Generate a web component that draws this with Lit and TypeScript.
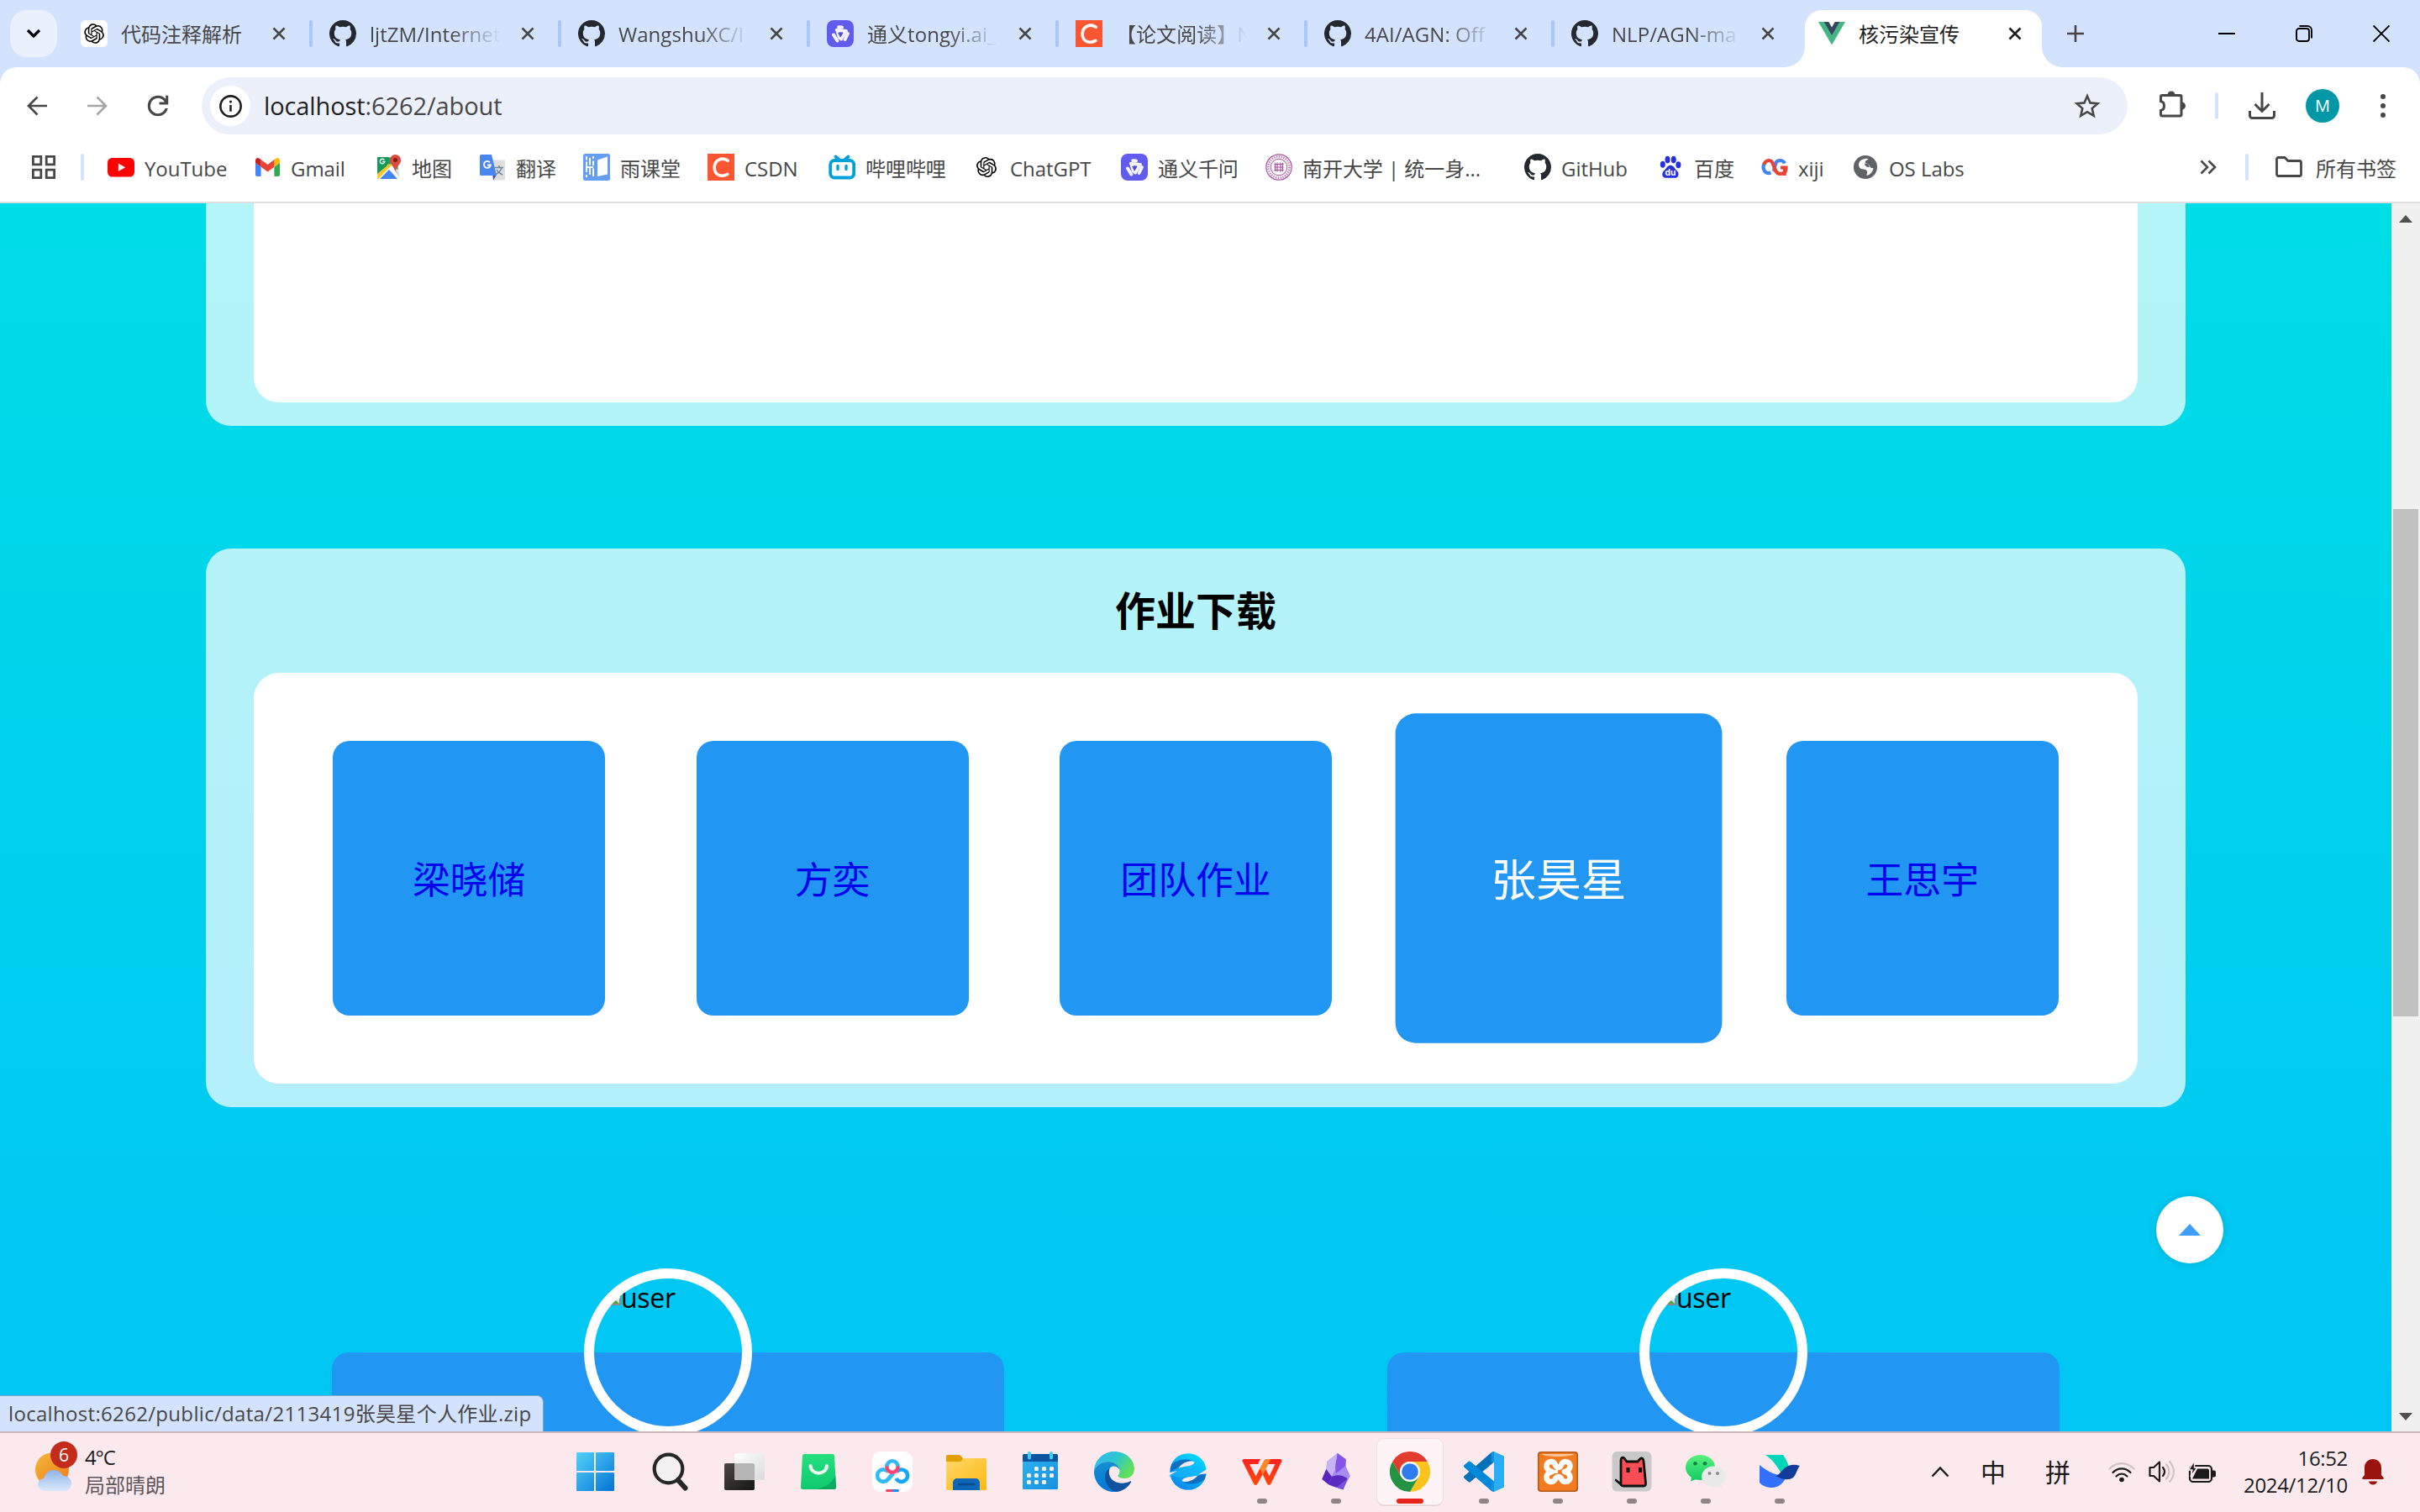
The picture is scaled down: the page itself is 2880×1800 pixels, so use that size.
import { LitElement, html, css, svg, nothing, type TemplateResult, type SVGTemplateResult } from "lit";
import { customElement, property } from "lit/decorators.js";
import { styleMap } from "lit/directives/style-map.js";
import { classMap } from "lit/directives/class-map.js";

const github = svg`<path fill="#24292f" d="M8 0C3.58 0 0 3.58 0 8c0 3.54 2.29 6.53 5.47 7.59.4.07.55-.17.55-.38 0-.19-.01-.82-.01-1.49-2.01.37-2.53-.49-2.69-.94-.09-.23-.48-.94-.82-1.13-.28-.15-.68-.52-.01-.53.63-.01 1.08.58 1.23.82.72 1.21 1.87.87 2.33.66.07-.52.28-.87.51-1.07-1.78-.2-3.64-.89-3.64-3.95 0-.87.31-1.59.82-2.15-.08-.2-.36-1.02.08-2.12 0 0 .67-.21 2.2.82.64-.18 1.32-.27 2-.27s1.36.09 2 .27c1.53-1.04 2.2-.82 2.2-.82.44 1.1.16 1.92.08 2.12.51.56.82 1.27.82 2.15 0 3.07-1.87 3.75-3.65 3.95.29.25.54.73.54 1.48 0 1.07-.01 1.93-.01 2.2 0 .21.15.46.55.38A8.013 8.013 0 0 0 16 8c0-4.42-3.58-8-8-8z"/>`;

const knot = svg`<path d="M22.2819 9.8211a5.9847 5.9847 0 0 0-.5157-4.9108 6.0462 6.0462 0 0 0-6.5098-2.9A6.0651 6.0651 0 0 0 4.9807 4.1818a5.9847 5.9847 0 0 0-3.9977 2.9 6.0462 6.0462 0 0 0 .7427 7.0966 5.98 5.98 0 0 0 .511 4.9107 6.051 6.051 0 0 0 6.5146 2.9001A5.9847 5.9847 0 0 0 13.2599 24a6.0557 6.0557 0 0 0 5.7718-4.2058 5.9894 5.9894 0 0 0 3.9977-2.9001 6.0557 6.0557 0 0 0-.7475-7.073zm-9.022 12.6081a4.4755 4.4755 0 0 1-2.8764-1.0408l.1419-.0804 4.7783-2.7582a.7948.7948 0 0 0 .3927-.6813v-6.7369l2.02 1.1686a.071.071 0 0 1 .038.052v5.5826a4.504 4.504 0 0 1-4.4945 4.4944zm-9.6607-4.1254a4.4708 4.4708 0 0 1-.5346-3.0137l.142.0852 4.783 2.7582a.7712.7712 0 0 0 .7806 0l5.8428-3.3685v2.3324a.0804.0804 0 0 1-.0332.0615L9.74 19.9502a4.4992 4.4992 0 0 1-6.1408-1.6464zM2.3408 7.8956a4.485 4.485 0 0 1 2.3655-1.9728V11.6a.7664.7664 0 0 0 .3879.6765l5.8144 3.3543-2.0201 1.1685a.0757.0757 0 0 1-.071 0l-4.8303-2.7865A4.504 4.504 0 0 1 2.3408 7.872zm16.5963 3.8558L13.1038 8.364 15.1192 7.2a.0757.0757 0 0 1 .071 0l4.8303 2.7913a4.4944 4.4944 0 0 1-.6765 8.1042v-5.6772a.79.79 0 0 0-.407-.667zm2.0107-3.0231l-.142-.0852-4.7735-2.7818a.7759.7759 0 0 0-.7854 0L9.409 9.2297V6.8974a.0662.0662 0 0 1 .0284-.0615l4.8303-2.7866a4.4992 4.4992 0 0 1 6.6802 4.66zM8.3065 12.863l-2.02-1.1638a.0804.0804 0 0 1-.038-.0567V6.0742a4.4992 4.4992 0 0 1 7.3757-3.4537l-.142.0805L8.704 5.459a.7948.7948 0 0 0-.3927.6813zm1.0976-2.3654l2.602-1.4998 2.6069 1.4998v2.9994l-2.5974 1.4997-2.6067-1.4997Z"/>`;

const tongyi = svg`<rect width="32" height="32" rx="8" fill="#615ced"/>
  <g fill="none" stroke-linecap="round" stroke-linejoin="round">
    <g stroke="#f4f3ff" stroke-width="4">
      <path d="M14.200 8.200 18 8.600"/><path d="M11.800 11.800 23 13"/>
      <path d="M25 16 21.600 23"/><path d="M21 15.500 17 22.500"/>
      <path d="M8 17.500 12.400 24.500"/><path d="M12.800 14 15 21"/>
    </g>
    <path d="M14 15.200h5l-2.700 4.600z" stroke="#5a54d6" stroke-width="1" fill="#4a44c9"/>
  </g>`;

const csdn = svg`<rect width="32" height="32" fill="#fc5531"/>
  <path d="M24.2 8.2C17.5 3.6 8.4 7 8.2 16.4c-.1 9.200 8.500 12 15.600 8" fill="none" stroke="#fff" stroke-width="3.600" stroke-linecap="round"/>`;

/** Icon artwork: view box and shapes. */
const ART: Record<string, [string, SVGTemplateResult]> = {
  github: ["0 0 16 16", github],
  knot: ["-2 -2 28 28", knot],
  knotTile: ["0 0 32 32", svg`<rect width="32" height="32" rx="6" fill="#fff"/><g transform="translate(4.200 4.200) scale(.985)">${knot}</g>`],
  tongyi: ["0 0 32 32", tongyi],
  csdn: ["0 0 32 32", csdn],
  vue: ["0 0 32 28", svg`<path fill="#41b883" d="M0 0h6.400L16 16.500 25.600 0H32L16 27.500z"/><path fill="#35495e" d="M6.400 0h5.900L16 6.400 19.700 0h5.900L16 16.500z"/>`],
  youtube: ["0 0 32 23", svg`<rect width="32" height="22.500" rx="5.500" fill="#f00"/><path d="M12.800 6.400v9.700l8.400-4.850z" fill="#fff"/>`],
  gmail: ["52 42 88 66", svg`<path fill="#4285f4" d="M58 108h14V74L52 59v43c0 3.320 2.690 6 6 6"/><path fill="#34a853" d="M120 108h14c3.320 0 6-2.690 6-6V59l-20 15"/><path fill="#fbbc04" d="M120 48v26l20-15v-8c0-7.420-8.470-11.650-14.400-7.200"/><path fill="#ea4335" d="M72 74V48l24 18 24-18v26L96 92"/><path fill="#c5221f" d="M52 51v8l20 15V48l-5.600-4.200c-5.940-4.450-14.400-.220-14.400 7.200"/>`],
  maps: ["0 0 32 32", svg`<path d="M3.500 4.500h24v25h-24z" fill="#1da262"/><path d="M3.500 29 20 12l9 16.500-1 1.500H4z" fill="#fff"/><path d="M17 19 6 30h21z" fill="#4285f4"/><path d="M22 14l7 7v8z" fill="#dadce0"/><path d="M3 22 15 13l7.500-1.500L4 29.600z" fill="#fbc92d"/><path d="M3 21.500v8l1.500.4L18 15l-2-3z" fill="#fbc92d"/><path d="M3 4h14L15 14 3 24z" fill="#15995a"/>
    <path d="M24.500 1a6.600 6.600 0 0 1 6.600 6.600c0 5.400-4.900 6.400-6.600 14-1.700-7.600-6.600-8.600-6.600-14A6.600 6.600 0 0 1 24.500 1z" fill="#dd4b3e"/><circle cx="24.500" cy="7.400" r="2.500" fill="#7d1c16"/><path d="M11.300 7.300a2.800 2.800 0 1 0 .6 2.200H9.200" stroke="#fff" stroke-width="1.300" fill="none"/>`],
  translate: ["0 0 32 32", svg`<path d="M11 7.500h20V30a1.500 1.500 0 0 1-1.500 1.500H17z" fill="#dedede"/><path d="M16.500 25H21l-4 6.500z" fill="#3a48c0"/><path d="M2.500 1H15l6 25H2.500A1.500 1.500 0 0 1 1 24.500v-22A1.500 1.500 0 0 1 2.500 1z" fill="#4a86f0"/><path d="M13 10.300a4 4 0 1 0 .9 3.200H10" stroke="#fff" stroke-width="1.900" fill="none"/><g stroke="#6f8796" stroke-width="1.500" fill="none"><path d="M19 16.500h10M24 14v2.500M27 16.500c-1 4-4 6.500-7 8M21 19c1.500 3 4 4.500 7 6"/></g>`],
  yuketang: ["0 0 32 32", svg`<rect width="32" height="32" rx="2.500" fill="#639ef4"/><path d="M17 7.500 29 3.500v21L17 27z" fill="#fff"/><g stroke="#fff" stroke-width="2"><path d="M4 3v4.500M4 9.500V22M4 25v3M8 5v8.500M8 17v8M12 3v3M12 8.500V14M4 16h8M12 17.500V27"/></g>`],
  bilibili: ["0 0 32 32", svg`<g fill="none" stroke="#00a1d6" stroke-width="3.800" stroke-linecap="round"><path d="m8.500 3.500 4.500 4M23.500 3.500l-4.500 4"/><rect x="2.200" y="8" width="28" height="20.500" rx="5"/></g><path d="M11 14.500v4M21 14.500v4" stroke="#00a1d6" stroke-width="3.400" stroke-linecap="round"/>`],
  nankai: ["0 0 32 32", svg`<g fill="none" stroke="#a8509f"><circle cx="16" cy="16" r="15.200" stroke-width="1.200"/><circle cx="16" cy="16" r="12.600" stroke-width="2.600" stroke-dasharray="1.300 1.500" stroke="#b873b1"/><circle cx="16" cy="16" r="9.800" stroke-width="1"/><path d="M11.500 11v10M14 10.500v11M18 10.500v11M20.500 11v10M10.500 12.500h11M10.500 16h11M10.500 19.500h11" stroke-width="1.200"/></g>`],
  baidu: ["0 0 32 32", svg`<g fill="#2630de"><ellipse cx="6.200" cy="12.500" rx="3.200" ry="4.200"/><ellipse cx="12.300" cy="6.500" rx="3.200" ry="4.600"/><ellipse cx="20" cy="6.500" rx="3.200" ry="4.600"/><ellipse cx="26" cy="13" rx="3.200" ry="4.200"/><path d="M16 13.500c4 0 5.500 4.500 8 6.700 3.500 3 2.700 9.300-2 9.300H10c-5 0-5.600-6.300-2-9.300 2.500-2.200 4-6.700 8-6.700z"/></g><text x="16" y="27" text-anchor="middle" fill="#fff" font-family="Inter, sans-serif" font-weight="700" font-size="11">du</text>`],
  xiji: ["0 0 32 22", svg`<g fill="none" stroke-width="4.200"><path d="M12.500 4.200C9 1.600 4.800 3.500 3.200 8" stroke="#ea4335"/><path d="M3.200 7.500C1 14 5 19.500 11.500 17.800" stroke="#4285f4"/><path d="M14.500 16c2.500-3 .5-13 7.500-13 3 0 5 1.200 6 3.500" stroke="#4285f4"/><path d="M12 4c3.500 3 3.500 14 9.500 14.800 5 .5 8-1 8-7.300H23" stroke="#ea4335"/><path d="M27.800 11.500V21" stroke="#ea4335" stroke-width="4"/></g>`],
  globe: ["0 0 28 28", svg`<circle cx="14" cy="14" r="14" fill="#5f6368"/><path d="M9 5.500c3-1.500 7-2 8.500-1.500-1 2-4.500 2-3.500 4.500.8 2 4 1 5 4 1 3.500 4 2 4.500 3-1 4.500-4 7.500-8 8.500 0-3 2-4.500-.5-6.500-2.500-2-6 .5-8.500-4C5 10 7 7 9 5.500z" fill="#fff"/><path d="M13.500 9c2 1.500 4.800.5 5.200 4.500-1.500 1.500-4-.5-5.500-2z" fill="#5f6368"/>`],
  close: ["0 0 16 16", svg`<path d="m1.500 1.500 13 13m0-13-13 13" fill="none" stroke="currentColor" stroke-width="2.600"/>`],
  chevronDown: ["0 0 18 12", svg`<path d="m2 2 7 7 7-7" fill="none" stroke="currentColor" stroke-width="3.200"/>`],
  plus: ["0 0 22 22", svg`<path d="M11 1v20M1 11h20" stroke="#474747" stroke-width="2.600"/>`],
  minimize: ["0 0 20 20", svg`<path d="M0 10h20" stroke="#000" stroke-width="2"/>`],
  restore: ["0 0 20 20", svg`<g fill="none" stroke="#000" stroke-width="1.900"><rect x="1" y="4" width="15" height="15" rx="3"/><path d="M4.500 1h9.500a5 5 0 0 1 5 5v9.500"/></g>`],
  windowClose: ["0 0 20 20", svg`<path d="m.5.5 19 19m0-19-19 19" stroke="#000" stroke-width="1.900"/>`],
  back: ["0 0 24 24", svg`<path d="M24 12H2.500M12.500 1.500 2 12l10.500 10.500" fill="none" stroke="currentColor" stroke-width="2.700"/>`],
  forward: ["0 0 24 24", svg`<path d="M0 12h21.500M11.500 1.500 22 12 11.500 22.500" fill="none" stroke="currentColor" stroke-width="2.700"/>`],
  reload: ["3.500 3.500 17 17", svg`<path fill="#474747" d="M12 20q-3.350 0-5.675-2.325T4 12t2.325-5.675T12 4q1.725 0 3.300.712T18 6.750V4h2v7h-7V9h4.200q-.8-1.400-2.187-2.200T12 6Q9.500 6 7.750 7.750T6 12t1.750 4.250T12 18q1.925 0 3.475-1.100T17.650 14h2.100q-.7 2.650-2.850 4.325T12 20"/>`],
  info: ["0 0 26 26", svg`<circle cx="13" cy="13" r="11.700" fill="none" stroke="#1f1f1f" stroke-width="2.500"/><path d="M13 11.500v7.500" stroke="#1f1f1f" stroke-width="2.400"/><circle cx="13" cy="7.800" r="1.500" fill="#1f1f1f"/>`],
  star: ["0 0 32 32", svg`<path d="m16 4.200 3.500 8.200 8.900.8-6.700 5.900 2 8.700L16 23.200l-7.700 4.600 2-8.700-6.700-5.900 8.900-.8z" fill="none" stroke="#474747" stroke-width="2.600"/>`],
  puzzle: ["0 0 36 36", svg`<path d="M4.500 12.500V7a1.500 1.500 0 0 1 1.500-1.500h21.500A1.500 1.500 0 0 1 29 7v21.500a1.500 1.500 0 0 1-1.500 1.500H6a1.500 1.500 0 0 1-1.500-1.500v-5c2.600-.6 4-2.900 4-5.500s-1.400-4.900-4-5.500z" fill="none" stroke="#474747" stroke-width="3"/><path d="M12.500 5a4.500 4.500 0 0 1 9 0zM29.500 13.500a4.500 4.500 0 0 1 0 9z" fill="#474747"/>`],
  download: ["0 0 32 32", svg`<path d="M16 0v21M7.500 14l8.500 8.500 8.500-8.500M1.500 22v5.500a3 3 0 0 0 3 3h23a3 3 0 0 0 3-3V22" fill="none" stroke="#474747" stroke-width="3"/>`],
  dots: ["0 0 8 28", svg`<g fill="#474747"><circle cx="4" cy="3" r="3"/><circle cx="4" cy="14" r="3"/><circle cx="4" cy="25" r="3"/></g>`],
  apps: ["0 0 28 28", svg`<g fill="none" stroke="#474747" stroke-width="2.800"><path d="M1.400 1.400h9.400v9.400H1.400zM17.200 1.400h9.400v9.400h-9.400zM1.400 17.200h9.400v9.400H1.400zM17.200 17.200h9.400v9.400h-9.400z"/></g>`],
  more: ["0 0 20 18", svg`<path d="m1.500 1.500 7.500 7.500-7.500 7.500M10.500 1.500 18 9l-7.500 7.500" fill="none" stroke="#474747" stroke-width="2.600"/>`],
  folder: ["0 0 32 26", svg`<path d="M1.500 3.500a2 2 0 0 1 2-2h7.500l4 4h13.500a2 2 0 0 1 2 2v14a2 2 0 0 1-2 2h-25a2 2 0 0 1-2-2z" fill="none" stroke="#474747" stroke-width="2.800"/>`],
  broken: ["0 0 32 32", svg`<path d="M3 1h20l8 8v22H3z" fill="#cfe2f8" stroke="#8a8a8a" stroke-width="2"/><path d="M4 30 16 16l14 14z" fill="#51a83b"/><path d="m20 22 11-9v10l-6 4z" fill="#fff"/>`],
  up: ["0 0 26 14", svg`<path d="M13 0 26 14H0z" fill="#409eff"/>`],
  arrowUp: ["0 0 16 9", svg`<path d="M8 0l8 9H0z" fill="#505050"/>`],
  arrowDown: ["0 0 16 9", svg`<path d="M8 9 16 0H0z" fill="#505050"/>`],
  weather: ["0 0 44 46", svg`<defs><linearGradient id="sun" x1="0" y1="0" x2="1" y2="1"><stop offset="0" stop-color="#f2b93a"/><stop offset="1" stop-color="#f07818"/></linearGradient><linearGradient id="cloud" x1="0" y1="0" x2="0" y2="1"><stop offset="0" stop-color="#8fb4ee"/><stop offset="1" stop-color="#dbe8fb"/></linearGradient></defs><circle cx="20" cy="20.500" r="20" fill="url(#sun)"/><path d="M11 46a7.500 7.500 0 0 1-.8-15A12 12 0 0 1 33 28a9 9 0 0 1 2 18z" fill="url(#cloud)"/>`],
  windows: ["1 0 48 48", svg`<defs><linearGradient id="win" gradientUnits="userSpaceOnUse" x1="0" y1="0" x2="48" y2="48"><stop offset="0" stop-color="#55d4ff"/><stop offset="1" stop-color="#0070d0"/></linearGradient></defs><g fill="url(#win)"><rect y="1" width="22" height="22" rx="1"/><rect x="24" y="1" width="22" height="22" rx="1"/><rect y="25" width="22" height="22" rx="1"/><rect x="24" y="25" width="22" height="22" rx="1"/></g>`],
  search: ["-1 0 48 48", svg`<circle cx="20.500" cy="20.500" r="16.800" fill="#f5f1f2" stroke="#262828" stroke-width="4.200"/><path d="m32 34 8.500 9.500" stroke="#262828" stroke-width="6" stroke-linecap="round"/>`],
  taskview: ["0 0 48 48", svg`<defs><linearGradient id="tvd" x1="0" y1="0" x2="1" y2="1"><stop offset="0" stop-color="#4a4845"/><stop offset="1" stop-color="#151515"/></linearGradient><linearGradient id="tvl" x1="0" y1="0" x2="1" y2="1"><stop offset="0" stop-color="#fff"/><stop offset="1" stop-color="#d9dadb"/></linearGradient></defs><rect y="14" width="36" height="32" rx="2" fill="url(#tvd)"/><rect x="12" y="2" width="36" height="32" rx="2" fill="url(#tvl)"/><path d="M12 14h22a2 2 0 0 1 2 2v18H14a2 2 0 0 1-2-2z" fill="#b5b5b5"/>`],
  store: ["0 0 48 48", svg`<defs><linearGradient id="bag" x1="0" y1="0" x2="0" y2="1"><stop offset="0" stop-color="#25e07f"/><stop offset="1" stop-color="#0fc96f"/></linearGradient></defs><path d="M7 3h34a2 2 0 0 1 2 2l2 37.500a2.500 2.500 0 0 1-2.500 2.500h-37A2.500 2.500 0 0 1 3 42.500L5 5a2 2 0 0 1 2-2z" fill="url(#bag)"/><path d="M44.200 28 45 42.500a2.500 2.500 0 0 1-2.500 2.500H21c14-3 21-9 23.200-17z" fill="#0a9f5f" opacity=".75"/><path d="M14.500 17c1 11.500 18.500 11.500 19.500 0" fill="none" stroke="#eef8f2" stroke-width="4" stroke-linecap="round"/>`],
  netdisk: ["0 0 48 48", svg`<rect width="48" height="48" rx="10" fill="#fff"/><g fill="none" stroke-width="4.600"><path d="M19 31.500A7 7 0 1 1 17 23.500" stroke="none"/><path d="M29 24.500a7.200 7.200 0 1 1-.5 7.500" stroke="#16a5ff"/><path d="M18.800 24a7.200 7.200 0 1 0 .2 9l5.500-6.500" stroke="#2fbcf5"/><path d="M19 33l6-7" stroke="#2fbcf5"/><path d="M17.300 18a6.700 6.700 0 0 1 13.400 0" stroke="#33b8f5"/><path d="M17.300 17.500a6.700 7.500 0 0 0 13.400 0" stroke="#fb4571"/></g><path d="M17.500 45H24v3h-6.500a1.500 1.500 0 0 1 0-3z" fill="#fb3e68"/><path d="M24 45h6.500a1.500 1.500 0 0 1 0 3H24z" fill="#2186fb"/>`],
  explorer: ["0 0 48 48", svg`<defs><linearGradient id="fld" x1="0" y1="0" x2="1" y2="1"><stop offset="0" stop-color="#ffd868"/><stop offset="1" stop-color="#fdb813"/></linearGradient></defs><path d="M0 5.500A1.500 1.500 0 0 1 1.500 4H15c2 0 3 2 5 4v6H0z" fill="#e0a000"/><path d="M0 12h16c3 0 3-4 6-4h24.500A1.500 1.500 0 0 1 48 9.500v35a1.500 1.500 0 0 1-1.500 1.500h-45A1.500 1.500 0 0 1 0 44.500z" fill="url(#fld)"/><path d="M8 46v-9a5 5 0 0 1 5-5h22a5 5 0 0 1 5 5v9z" fill="#0d66b8"/><path d="M15 39h18" stroke="#0a4a8c" stroke-width="2.400" stroke-linecap="round"/>`],
  calendar: ["0 0 48 48", svg`<defs><linearGradient id="cal" x1="0" y1="0" x2="1" y2="1"><stop offset="0" stop-color="#2bb0ee"/><stop offset="1" stop-color="#178fe0"/></linearGradient></defs><path d="M3 10h42v33.500a1.500 1.500 0 0 1-1.500 1.500h-39A1.500 1.500 0 0 1 3 43.500z" fill="url(#cal)"/><path d="M3 4.500A1.500 1.500 0 0 1 4.500 3h39A1.500 1.500 0 0 1 45 4.500V12H3z" fill="#0b55a0"/><path d="M11 2v5.500M37 2v5.500" stroke="#42cdf8" stroke-width="4" stroke-linecap="round"/><g fill="#f2f4f5"><rect x="17" y="18" width="5" height="5" rx="1.500"/><rect x="26" y="18" width="5" height="5" rx="1.500"/><rect x="35" y="18" width="5" height="5" rx="1.500"/><rect x="8" y="26" width="5" height="5" rx="1.500"/><rect x="17" y="26" width="5" height="5" rx="1.500"/><rect x="26" y="26" width="5" height="5" rx="1.500"/><rect x="35" y="26" width="5" height="5" rx="1.500"/><rect x="8" y="34" width="5" height="5" rx="1.500"/><rect x="17" y="34" width="5" height="5" rx="1.500"/><rect x="26" y="34" width="5" height="5" rx="1.500"/></g>`],
  edge: ["0 0 48 48", svg`<defs><linearGradient id="ed1" x1="0" y1="0" x2="1" y2=".5"><stop offset="0" stop-color="#36b5f5"/><stop offset=".55" stop-color="#2bc8ce"/><stop offset="1" stop-color="#62e05a"/></linearGradient><linearGradient id="ed2" x1="0" y1="0" x2="0" y2="1"><stop offset="0" stop-color="#158fd0"/><stop offset="1" stop-color="#0078d8"/></linearGradient></defs>
    <path d="M0 24C0 10.700 10.700 0 24 0s24 9 24 20.500c0 7-5 11.500-11.500 11.500-4.500 0-8.500-1.500-8-3.500.3-1 2-2 2-5.500 0-6-6-11-13.500-11C8 12 1.500 17 0 24z" fill="url(#ed1)"/>
    <path d="M0 24c1.500-7 8-12 17-12 7 0 13 4.500 13.500 10-1.500-3-4-4.500-7-4.500-5 0-8 6-6 13.500C20 39.500 28 44 36 43c-3.500 3-8 5-12.500 5C10.700 48 0 37.300 0 24z" fill="url(#ed2)"/>
    <path d="M18.500 20C11 24 11.500 37 19 44c2 2 4.500 3.300 7 4 8-.5 14.500-5 18-11.500.5-1-.3-1.500-1.200-1C34 40 20 37.500 18 27c-.4-3 .2-5.500.5-7z" fill="#10529e"/>`],
  browser360: ["0 0 48 48", svg`<defs><linearGradient id="e36" x1=".8" y1="0" x2=".2" y2="1"><stop offset="0" stop-color="#04dcff"/><stop offset="1" stop-color="#0a84ec"/></linearGradient></defs><circle cx="24" cy="24" r="21.800" fill="url(#e36)"/><path d="M4.500 15C12 9.500 22 8 31 11.500 24 9 14 19 3 24c0-3 .4-6 1.500-9z" fill="#0e6fc4"/><path d="M43.500 33C37 39 26 40.500 16.500 36 26 39 33 29 45 24.500c0 3-.4 6-1.500 8.500z" fill="#0e6fc4"/><path d="M13 19.500c4-7 14-9.500 18.500-7-1.500 5-8.500 4.500-18.500 7z" fill="#fce9ee"/><path d="M35 28.500c-4 6.500-14 9-18.500 6.500 1.500-5 8.500-4 18.500-6.500z" fill="#fce9ee"/><path d="M1.500 26C14 24 27 15 37 22c4-1 7-1 10 0-12 2-24 11-35 8.500C8.500 28.500 5 28.500 2 31z" fill="#1bb8fb" opacity=".55"/><path d="M0 25.500 11.500 23 0 29zM48 26l-12 1.500L48 20z" fill="#fce9ee"/>`],
  wps: ["0 0 48 48", svg`<defs><linearGradient id="wps" x1="0" y1="0" x2="0" y2="1"><stop offset="0" stop-color="#ff2020"/><stop offset="1" stop-color="#ff4a0a"/></linearGradient></defs><path d="M2.500 9H22l-3 6H9l7.500 14.500L26.500 11a3.500 3.500 0 0 1 3-2h16a2 2 0 0 1 1.700 3L34.500 38.500a2.500 2.500 0 0 1-4.500 0L27.500 33l-2.700-5.500 3.500-6.500 4.200 8.500L39.500 15h-8.300L18.500 38.500a2.500 2.500 0 0 1-4.500 0L.8 12A2 2 0 0 1 2.500 9z" fill="url(#wps)"/><path d="M29.500 9h5l-3.300 6-6.700 12-3.200-6.500L26.500 11a3.500 3.500 0 0 1 3-2z" fill="#fb8a24"/>`],
  obsidian: ["0 0 48 48", svg`<path d="M25.700 2 35.700 9.300l-.4 8 5.400 12-8.400 16-12.300-4-12.700-8.300L12.300 21l1-9z" fill="#a88bf0"/><path d="M25.700 2 13.300 12l-1 9 6 9.500 5-9.500z" fill="#c6b5f4"/><path d="M25.700 2 35.700 9.300l-.4 8L24 28l-1-10z" fill="#8554ea"/><path d="M35.300 17.300l5.400 12-3.700 4L22.500 27z" fill="#a78cf2"/><path d="M12.300 21 7.300 33l8 6.500L19 30z" fill="#5a25bd"/><path d="M19 30c6-3 13-2 18.500 2l-5.200 13.300-12.300-4-4.700-1.800z" fill="#5a2bc0"/><path d="m37 33-4.700 12.300-8-2.500z" fill="#7d50e0"/>`],
  chrome: ["0 0 48 48", svg`<path d="M24 12h20.800A24 24 0 0 1 24 48l10.400-18z" fill="#fcc31e"/><path d="M3.200 12A24 24 0 0 0 24 48l10.400-18H13.600z" fill="#229342"/><path d="M3.200 12A24 24 0 0 1 44.800 12H24A12 12 0 0 0 13.600 30z" fill="#e33b2e"/><circle cx="24" cy="24" r="12" fill="#fff"/><circle cx="24" cy="24" r="9.800" fill="#2f7bf0"/>`],
  vscode: ["0 0 48 48", svg`<path d="M36 0v12.500L8 36a2 2 0 0 1-2.600 0L.8 32a2 2 0 0 1 0-3L33 1z" fill="#0071ba"/><path d="M36 48V35.500L8 12a2 2 0 0 0-2.600 0L.8 16a2 2 0 0 0 0 3L33 47z" fill="#0089d8"/><path d="M36 0l12 5.500v37L36 48z" fill="#29aef6"/><path d="M36 0 33 1v12h3zM36 48l-3-1V35h3z" fill="#1292df"/>`],
  xampp: ["0 0 48 48", svg`<rect width="48" height="48" rx="4" fill="#b35a17"/><rect x="1.500" y="1.500" width="45" height="45" rx="4" fill="#f27a20"/><path d="M5 3h38c-2 4-36 4-38 0z" fill="#fbc59a"/><g fill="none" stroke="#fff" stroke-width="6.600" stroke-linejoin="round"><path d="M17 24c-8.500-1.500-8.500-12-1-12 6.500 0 3.500 7 8.500 7s2-7 8.500-7c7.500 0 7.500 10.500-1 12 8.500 1.500 8.500 12 1 12-6.500 0-3.500-6-8.500-6s-2 6-8.500 6c-7.500 0-7.500-10.500 1-12z"/><path d="M16 24h8" stroke-width="4"/></g>`],
  cat: ["0 0 48 48", svg`<rect x=".5" width="47" height="47.500" rx="6" fill="#c9c9c9"/><path d="M12 40 5 34" stroke="#111" stroke-width="2.600" stroke-linecap="round"/><path d="M11 11c0-3.500 2-5 4-3l3 4h13l3-3.500c2-1.500 4 0 4 3l2.500 26c.2 2.500-.5 3.500-2.500 3.500H14c-2.500 0-3-1-3-3.500z" fill="#ff4d55" stroke="#111" stroke-width="2.800"/><path d="M19.500 19v6M34 19v6" stroke="#111" stroke-width="4"/>`],
  wechat: ["0 0 48 48", svg`<defs><linearGradient id="wx" x1="0" y1="0" x2="0" y2="1"><stop offset="0" stop-color="#5af07e"/><stop offset="1" stop-color="#0fcb63"/></linearGradient></defs><path d="M17.500 4C27 4 35 10.500 35 19s-8 15-17.500 15c-2 0-4-.3-5.800-.8L6 35.500l1-4.700C2.800 28 0 23.800 0 19 0 10.500 8 4 17.500 4z" fill="url(#wx)"/><circle cx="11.500" cy="14.300" r="2.300" fill="#13824a"/><circle cx="23" cy="14.300" r="2.300" fill="#13824a"/><path d="M33.500 17.500C41.500 17.500 48 23 48 29.700c0 4-2 7.300-5.500 9.500l.5 4-4.500-2c-1.600.5-3.200.8-5 .8-8 0-14.300-5.500-14.300-12.300s6.300-12.200 14.300-12.200z" fill="#e9e9e9"/><circle cx="28.500" cy="26" r="2" fill="#8c8c8c"/><circle cx="38" cy="26" r="2" fill="#8c8c8c"/>`],
  lark: ["0 0 48 48", svg`<path d="M7 4h21c3.500 5 6 10 7.500 16L26 26.500C21 17 14.500 9 7 4z" fill="#00d6b9"/><path d="M0 16c9 8 20 12.500 32 14-4 8-9.500 13-17 13C8 43 3 40.500 0 37z" fill="#3370ff"/><path d="M19.500 29c5-2 7-7 12-10.500S42 15 48 17c-3.500 4-4 10-8 14-5 3.500-13 3-20.500-2z" fill="#133c9a"/>`],
  chevronUp: ["0 0 22 14", svg`<path d="M1.500 12.500 11 2.500l9.500 10" fill="none" stroke="#1b1b1b" stroke-width="2.400"/>`],
  wifi: ["0 0 32 26", svg`<g fill="none" stroke-width="2.200" stroke-linecap="round"><path d="M1.500 9.500c8-8.500 21-8.500 29 0" stroke="#d3c1c7"/><path d="M5.500 14c6-6.300 15-6.300 21 0M9.500 18.500c4-4 9-4 13 0" stroke="#1b1b1b"/></g><circle cx="16" cy="22.500" r="2.800" fill="#1b1b1b"/>`],
  volume: ["0 0 32 28", svg`<g fill="none" stroke-width="2.200" stroke-linecap="round" stroke-linejoin="round"><path d="M1.500 9h4.500l7-6.500v23L6 19H1.500z" stroke="#1b1b1b"/><path d="M17 9c2.500 3 2.500 7 0 10" stroke="#1b1b1b"/><path d="M21 5.500c4.500 5 4.500 12 0 17M25 2c6.500 7 6.500 17 0 24" stroke="#d3c1c7"/></g>`],
  battery: ["0 0 34 26", svg`<rect x="2" y="6" width="26" height="19" rx="4" fill="none" stroke="#1b1b1b" stroke-width="2.200"/><path d="M29 11.500h2a2 2 0 0 1 2 2v4a2 2 0 0 1-2 2h-2z" fill="#1b1b1b"/><path d="M11 9.500h12a2 2 0 0 1 2 2v10H5z" fill="#1b1b1b"/><path d="M7.500 0 .5 11H5l-2 8 8-11H7.500z" fill="#1b1b1b" stroke="#fce9ee" stroke-width="1.400"/>`],
  bell: ["0 0 26 31", svg`<path d="M13 0c6 0 10 4.500 10 10v9l2.500 3a1.200 1.200 0 0 1-1 2h-23a1.200 1.200 0 0 1-1-2L3 19v-9C3 4.500 7 0 13 0z" fill="#9b130e"/><path d="M8 26.500h10c-.5 2.500-2.500 4-5 4s-4.500-1.500-5-4z" fill="#9b130e"/>`],
};

function icon(name: string, w: number, h = w): TemplateResult {
  const [box, shapes] = ART[name];
  return html`<svg class="icon" width=${w} height=${h} viewBox=${box} preserveAspectRatio="xMidYMid meet" aria-hidden="true">${shapes}</svg>`;
}

const base = css`
  * { box-sizing: border-box; }
  .icon { display: block; flex: none; }
  :host { font-family: "Open Sans", "Noto Sans CJK SC", sans-serif; }
`;

interface Tab { icon: string; title: string; width: number; titleWidth: number; last?: boolean }
const TABS: Tab[] = [
  { icon: "knotTile", title: "代码注释解析", width: 296, titleWidth: 156 },
  { icon: "github", title: "ljtZM/Internet", width: 296, titleWidth: 156 },
  { icon: "github", title: "WangshuXC/I", width: 296, titleWidth: 156 },
  { icon: "tongyi", title: "通义tongyi.ai_", width: 296, titleWidth: 156 },
  { icon: "csdn", title: "【论文阅读】N", width: 296, titleWidth: 156 },
  { icon: "github", title: "4AI/AGN: Off", width: 294, titleWidth: 154 },
  { icon: "github", title: "NLP/AGN-ma", width: 298, titleWidth: 154, last: true },
];

interface Bookmark { icon: string; iconW?: number; iconH?: number; title: string; textWidth: number }
const BOOKMARKS: Bookmark[] = [
  { icon: "youtube", iconH: 23, title: "YouTube", textWidth: 98 },
  { icon: "gmail", iconW: 29, iconH: 22, title: "Gmail", textWidth: 68 },
  { icon: "maps", title: "地图", textWidth: 48 },
  { icon: "translate", title: "翻译", textWidth: 48 },
  { icon: "yuketang", title: "雨课堂", textWidth: 72 },
  { icon: "csdn", title: "CSDN", textWidth: 68 },
  { icon: "bilibili", title: "哔哩哔哩", textWidth: 96 },
  { icon: "knot", iconW: 28, title: "ChatGPT", textWidth: 100 },
  { icon: "tongyi", title: "通义千问", textWidth: 96 },
  { icon: "nankai", title: "南开大学 | 统一身...", textWidth: 232 },
  { icon: "github", title: "GitHub", textWidth: 82 },
  { icon: "baidu", iconW: 30, title: "百度", textWidth: 48 },
  { icon: "xiji", iconH: 22, title: "xiji", textWidth: 32 },
  { icon: "globe", iconW: 28, title: "OS Labs", textWidth: 96 },
];

@customElement("browser-chrome")
export class BrowserChrome extends LitElement {
  static styles = [base, css`
    :host { display: block; background: #d3e3fd; color: #474747; font-size: 24px; line-height: 32px; }
    .strip { display: flex; height: 80px; align-items: center; padding-left: 12px; }
    .search { width: 56px; height: 56px; border-radius: 20px; background: #e9f1fe; color: #000; display: grid; place-items: center; margin-right: 8px; }
    .tab { display: flex; align-items: center; height: 80px; padding-left: 20px; flex: none; }
    .title { overflow: hidden; white-space: nowrap; margin: 0 24px 0 16px; flex: none; letter-spacing: .05px; height: 38px; padding-top: 2px; line-height: 36px;
      -webkit-mask-image: linear-gradient(90deg, #000 calc(100% - 60px), transparent); mask-image: linear-gradient(90deg, #000 calc(100% - 60px), transparent); }
    .plain { -webkit-mask-image: none; mask-image: none; letter-spacing: 0; }
    .sep { width: 4px; height: 32px; border-radius: 2px; background: #a8c7fa; margin-left: auto; }
    .active { position: relative; width: 282px; height: 68px; align-self: flex-end; background: #fff; border-radius: 20px 20px 0 0; padding: 0 24px 12px 16px; color: #1f1f1f; }
    .active .title { margin-right: auto; }
    .active::before, .active::after { content: ""; position: absolute; bottom: 0; width: 24px; height: 24px; }
    .active::before { left: -24px; background: radial-gradient(circle at 0 0, transparent 23.5px, #fff 24px); }
    .active::after { right: -24px; background: radial-gradient(circle at 100% 0, transparent 23.5px, #fff 24px); }
    .new { margin-left: 29px; }
    .controls { display: flex; margin-left: auto; }
    .control { width: 92px; height: 80px; display: grid; place-items: center; }
    .bar { display: flex; align-items: center; height: 92px; background: #fff; border-radius: 20px 20px 0 0; padding: 0 8px; }
    .cell { width: 72px; display: grid; place-items: center; flex: none; }
    .muted { color: #a6a6a6; }
    .omnibox { flex: 1; height: 68px; border-radius: 34px; background: #ecf0fa; margin: 0 17px 0 16px; display: flex; align-items: center; padding: 0 32px 0 10px; }
    .site { width: 48px; height: 48px; border-radius: 50%; background: #fff; display: grid; place-items: center; margin-right: 16px; }
    .url { font-size: 29px; letter-spacing: -.1px; line-height: 44px; flex: 1; }
    .host { color: #1f1f1f; }
    .divider { width: 4px; height: 32px; border-radius: 2px; background: #d3e3fd; flex: none; }
    .bar .divider { margin: 0 16px 0 15px; }
    .avatar { width: 40px; height: 40px; border-radius: 50%; background: #0097a7; color: #fff; font-size: 20px; display: grid; place-items: center; }
    .marks { display: flex; align-items: center; height: 70px; padding: 0 28px 14px 38px; background: #fff; border-bottom: 2px solid #dfdfdf; }
    .marks .first { margin: 0 28px 0 30px; }
    .mark { display: flex; align-items: center; gap: 12px; margin-right: 32px; flex: none; white-space: nowrap; }
    .fav { width: 32px; display: grid; place-items: center; flex: none; }
    .label { letter-spacing: -.05px; padding-top: 3px; }
    .rest { margin-left: auto; display: flex; align-items: center; }
    .rest .divider { margin: 0 32px 0 34px; }
    .all { margin-left: 16px; width: 96px; white-space: nowrap; padding-top: 3px; }
  `];

  render() {
    return html`
      <div class="strip">
        <div class="search">${icon("chevronDown", 18, 12)}</div>
        ${TABS.map((t) => html`
          <div class="tab" style=${styleMap({ width: `${t.width}px` })}>
            ${icon(t.icon, 32)}
            <div class=${classMap({ title: true, plain: t.icon === "knotTile" })} style=${styleMap({ width: `${t.titleWidth}px` })}>${t.title}</div>
            ${icon("close", 16)}
            ${t.last ? nothing : html`<div class="sep"></div>`}
          </div>`)}
        <div class="tab active">${icon("vue", 32, 28)}<div class="title plain">核污染宣传</div>${icon("close", 16)}</div>
        <div class="new">${icon("plus", 22)}</div>
        <div class="controls">
          <div class="control">${icon("minimize", 20)}</div>
          <div class="control">${icon("restore", 20)}</div>
          <div class="control">${icon("windowClose", 20)}</div>
        </div>
      </div>
      <div class="bar">
        <div class="cell">${icon("back", 24)}</div>
        <div class="cell muted">${icon("forward", 24)}</div>
        <div class="cell">${icon("reload", 26)}</div>
        <div class="omnibox">
          <div class="site">${icon("info", 27)}</div>
          <div class="url"><span class="host">localhost</span>:6262/about</div>
          ${icon("star", 32)}
        </div>
        <div class="cell">${icon("puzzle", 36)}</div>
        <div class="divider"></div>
        <div class="cell">${icon("download", 32)}</div>
        <div class="cell"><div class="avatar">M</div></div>
        <div class="cell">${icon("dots", 8, 28)}</div>
      </div>
      <div class="marks">
        ${icon("apps", 28)}
        <div class="divider first"></div>
        ${BOOKMARKS.map((b) => html`
          <div class="mark">
            <div class="fav">${icon(b.icon, b.iconW ?? 32, b.iconH ?? b.iconW ?? 32)}</div>
            <div class="label" style=${styleMap({ width: `${b.textWidth}px` })}>${b.title}</div>
          </div>`)}
        <div class="rest">${icon("more", 20, 18)}<div class="divider"></div>${icon("folder", 32, 26)}<div class="all">所有书签</div></div>
      </div>`;
  }
}

const DOWNLOADS = [
  { name: "梁晓储" }, { name: "方奕" }, { name: "团队作业" }, { name: "张昊星", hover: true }, { name: "王思宇" },
];

@customElement("page-view")
export class PageView extends LitElement {
  static styles = [base, css`
    :host { display: flex; min-height: 0; overflow: hidden; position: relative; }
    .page { flex: 1; display: flex; flex-direction: column; align-items: center; overflow: hidden; position: relative; background: linear-gradient(180deg, #00dde6, #00c5f5); }
    .card { width: 2356px; background: rgba(255, 255, 255, .7); border-radius: 30px; flex: none; padding: 0 57px 28px; }
    .intro { height: 265px; border-radius: 0 0 30px 30px; margin-bottom: 146px; }
    .panel { background: #fff; border-radius: 30px; height: 489px; display: flex; align-items: center; justify-content: space-around; padding: 0 40px; }
    .intro .panel { height: 237px; border-radius: 0 0 30px 30px; }
    .heading { margin: 0; height: 148px; font: 700 48px/148px "Open Sans", "Noto Sans CJK SC", sans-serif; text-align: center; color: #000; }
    .tile { width: 324px; height: 327px; border-radius: 20px; background: #2196f3; color: #00e; font-size: 44.8px; line-height: 60px; display: grid; place-items: center; padding-top: 3px; }
    .hover { transform: scale(1.2); color: #fff; padding-top: 1px; }
    .profiles { display: flex; gap: 456px; margin-top: 292px; }
    .profile { position: relative; width: 800px; height: 300px; border-radius: 20px; background: #2196f3; flex: none; }
    .photo { position: absolute; left: 300px; top: -100px; width: 200px; height: 200px; border: 12px solid #fff; border-radius: 50%; overflow: hidden; display: flex; color: #000; font-size: 32px; line-height: 46px; letter-spacing: -.3px; }
    .totop { position: absolute; left: 2566px; top: 1182px; width: 80px; height: 80px; border-radius: 50%; background: #fff; display: grid; place-items: center; box-shadow: 0 0 12px rgba(0, 0, 0, .12); }
    .status { position: absolute; left: 0; bottom: 0; width: 647px; height: 43px; border-top: 1px solid #7fa9cf; border-right: 1px solid #7fa9cf; border-radius: 0 8px 0 0; background: #d3e3fd; color: #474747; font-size: 24px; line-height: 42px; padding-left: 10px; white-space: nowrap; letter-spacing: .32px; }
    .scroll { width: 34px; background: #f0f0f0; display: flex; flex-direction: column; align-items: center; padding: 14px 0 13px; }
    .track { flex: 1; display: flex; padding-top: 341px; }
    .thumb { width: 30px; height: 604px; background: #c1c1c1; }
  `];

  render() {
    return html`
      <div class="page">
        <section class="card intro"><div class="panel"></div></section>
        <section class="card">
          <h2 class="heading">作业下载</h2>
          <div class="panel">
            ${DOWNLOADS.map((d) => html`<a class=${classMap({ tile: true, hover: !!d.hover })}>${d.name}</a>`)}
          </div>
        </section>
        <div class="profiles">
          ${[0, 1].map(() => html`<div class="profile"><div class="photo">${icon("broken", 32)}<span>user</span></div></div>`)}
        </div>
        <div class="totop">${icon("up", 26, 14)}</div>
        <div class="status">localhost:6262/public/data/2113419张昊星个人作业.zip</div>
      </div>
      <div class="scroll">
        ${icon("arrowUp", 16, 9)}
        <div class="track"><div class="thumb"></div></div>
        ${icon("arrowDown", 16, 9)}
      </div>`;
  }
}

const APPS: { icon: string; running?: boolean; active?: boolean }[] = [
  { icon: "windows" }, { icon: "search" }, { icon: "taskview" }, { icon: "store" }, { icon: "netdisk" },
  { icon: "explorer" }, { icon: "calendar" }, { icon: "edge" }, { icon: "browser360" },
  { icon: "wps", running: true }, { icon: "obsidian", running: true }, { icon: "chrome", active: true },
  { icon: "vscode", running: true }, { icon: "xampp", running: true }, { icon: "cat", running: true },
  { icon: "wechat", running: true }, { icon: "lark", running: true },
];

@customElement("task-bar")
export class TaskBar extends LitElement {
  @property() time = "16:52";
  @property() date = "2024/12/10";

  static styles = [base, css`
    :host { display: flex; height: 96px; border-top: 2px solid #c9b8be; background: #fce9ee; color: #1b1b1b; font-size: 24px; line-height: 32px; }
    .weather { width: 666px; display: flex; padding: 13px 0 0 42px; }
    .art { position: relative; width: 59px; padding-top: 10px; }
    .badge { position: absolute; left: 18px; top: -3px; width: 32px; height: 32px; border-radius: 50%; background: #c42b1c; color: #fff; font-size: 21px; text-align: center; }
    .temp { letter-spacing: -1.1px; }
    .sky { color: #5d565a; padding-top: 1px; }
    .app { width: 88px; display: flex; flex-direction: column; align-items: center; padding-top: 7px; flex: none; }
    .box { width: 78px; height: 78px; display: flex; flex-direction: column; align-items: center; justify-content: space-between; padding: 15px 0 1px; border-radius: 8px; }
    .on { background: #fef4f7; box-shadow: 0 0 0 1px #f1dfe5, 0 2px 1px #e3d0d6; }
    .dot { width: 12px; height: 6px; border-radius: 3px; background: #8f8387; }
    .wide { width: 32px; background: #e5231b; }
    .tray { flex: 1; display: flex; align-items: center; padding: 0 43px 5px 136px; }
    .ime { font: 400 30px/36px "Noto Sans CJK SC", sans-serif; color: #1b1b1b; padding-bottom: 2px; }
    .zh { margin-left: 37px; }
    .pin { margin-left: 47px; }
    .net { margin-left: 45px; }
    .vol { margin-left: 16px; }
    .bat { margin-left: 15px; }
    .clock { margin-left: auto; margin-right: 17px; text-align: right; font-size: 24px; letter-spacing: -.35px; }
    .bell { padding-top: 2px; }
  `];

  render() {
    return html`
      <div class="weather">
        <div class="art">${icon("weather", 44, 46)}<div class="badge">6</div></div>
        <div><div class="temp">4°C</div><div class="sky">局部晴朗</div></div>
      </div>
      ${APPS.map((a) => html`
        <div class="app"><div class=${classMap({ box: true, on: !!a.active })}>
          ${icon(a.icon, 48)}
          ${a.running || a.active ? html`<div class=${classMap({ dot: true, wide: !!a.active })}></div>` : nothing}
        </div></div>`)}
      <div class="tray">
        ${icon("chevronUp", 22, 14)}
        <span class="ime zh">中</span>
        <span class="ime pin">拼</span>
        <div class="net">${icon("wifi", 32, 26)}</div>
        <div class="vol">${icon("volume", 32, 28)}</div>
        <div class="bat">${icon("battery", 34, 26)}</div>
        <div class="clock"><div>${this.time}</div><div>${this.date}</div></div>
        <div class="bell">${icon("bell", 26, 31)}</div>
      </div>`;
  }
}

@customElement("app-root")
export class AppRoot extends LitElement {
  static styles = css`
    :host { display: grid; grid-template-rows: 242px 1462px 96px; width: 2880px; height: 1800px; overflow: hidden; background: #fff; }
  `;

  render() {
    return html`<browser-chrome></browser-chrome><page-view></page-view><task-bar></task-bar>`;
  }
}
